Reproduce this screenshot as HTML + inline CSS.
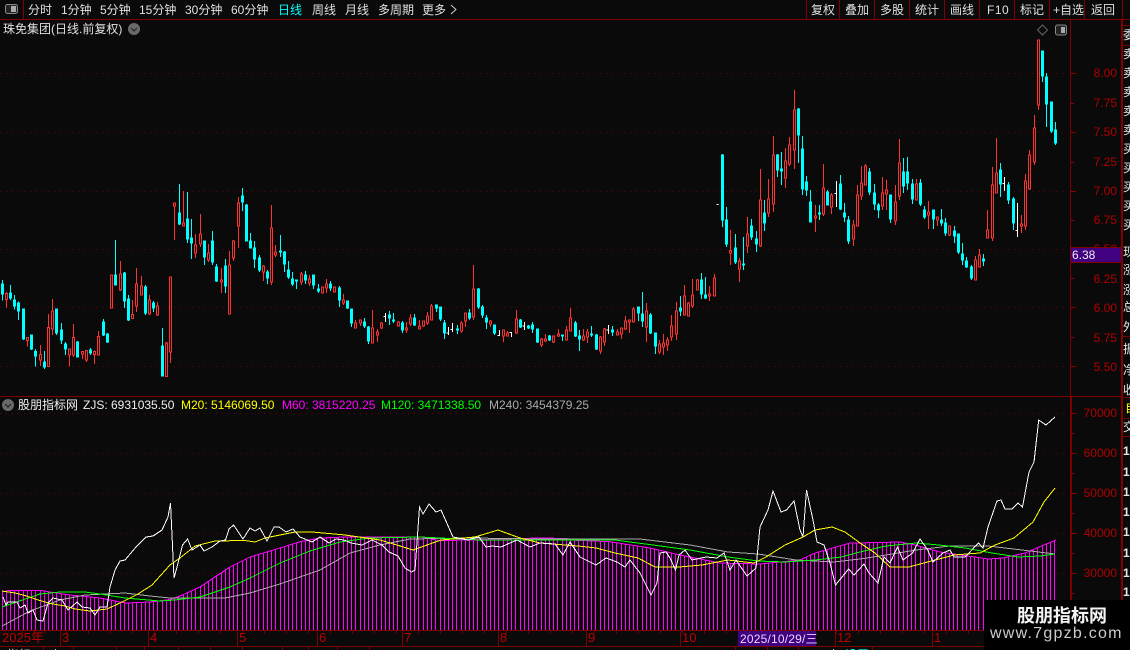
<!DOCTYPE html>
<html><head><meta charset="utf-8"><style>
html,body{margin:0;padding:0;background:#0a0a0a}
#p{position:relative;width:1130px;height:650px;overflow:hidden;background:#0a0a0a;font:12px/14px "Liberation Sans","WenQuanYi Zen Hei","Noto Sans CJK SC",sans-serif;color:#ddd}
#p div,#p span.t{position:absolute;white-space:nowrap}
svg{position:absolute;left:0;top:0}
.c,.r,.w{vector-effect:non-scaling-stroke;stroke-width:1}
.c{stroke:#0ff;fill:#0ff}.r{stroke:#ff3232;fill:none}.w{stroke:#fff;fill:none}
.a{color:#b00000;text-align:right;width:46px;left:1071px}
.b{color:#e0e0e0}
.m{color:#c00000;font-size:13px;top:631px}
.s{color:#e8e8e8;left:1123px}
</style></head><body><div id="p">
<svg width="1130" height="650" viewBox="0 0 1130 650" shape-rendering="crispEdges">
<defs><clipPath id="e"><polygon points="2,630 2,592 8,590.5 42,590.5 50,592 70,595 100,598 120,602 127,603 150,602 170,599.5 180,596 200,587 230,567 250,557 280,548 300,541.7 320,538 345,537 420,537 440,540.7 540,538 567,538.5 570,540 610,541.7 650,548 680,555 720,563 760,564 800,560 815,553 850,543 870,542.7 900,542 915,545 940,552 988,559 1003,558 1025,553 1044,545 1056,540 1056,630"/></clipPath></defs>
<!-- frame -->
<path d="M0 19.5H1130M23.5 0V19M806.5 0V19M839.5 0V19M874.5 0V19M909.5 0V19M944.5 0V19M979.5 0V19M1014.5 0V19M1049.5 0V19M1084.5 0V19M1122.5 0V650M1122 25.5H1130M1122 45.5H1130M1122 336.5H1130M1122 397.5H1130M1122 418.5H1130M1122 436.5H1130M1070.5 19V630M1071.5 397V630M1121.5 19V630M0 396.5H1122M0 630.5H1122M0 646.5H1122M43.5 646V650M73.5 646V650M116.5 646V650M144.5 646V650M178.5 646V650M210.5 646V650M242.5 646V650M282.5 646V650M308.5 646V650M337.5 646V650M369.5 646V650M735.5 646V650M767.5 646V650M798.5 646V650M872.5 646V650M60.5 631V646M148.5 631V646M237.5 631V646M317.5 631V646M402.5 631V646M498.5 631V646M586.5 631V646M680.5 631V646M835.5 631V646M932.5 631V646" stroke="#800000" fill="none"/>
<!-- axis ticks -->
<path d="M1071 73.5H1076M1071 103.5H1074M1071 132.5H1076M1071 162.5H1074M1071 191.5H1076M1071 220.5H1074M1071 278.5H1074M1071 307.5H1076M1071 337.5H1074M1071 366.5H1076M1071 413.5H1076M1071 433.5H1074M1071 453.5H1076M1071 473.5H1074M1071 493.5H1076M1071 513.5H1074M1071 533.5H1076M1071 553.5H1074M1071 573.5H1076M1071 593.5H1074" stroke="#900000" fill="none"/>
<line x1="22" y1="632" x2="1120" y2="632" stroke="#800000" stroke-width="3" stroke-dasharray="1 21"/>
<!-- grids -->
<path d="M0 73.5H1068M0 132.5H1068M0 191.5H1068M0 249.5H1068M0 307.5H1068M0 366.5H1068M0 413.5H1068M0 453.5H1068M0 493.5H1068M0 533.5H1068M0 573.5H1068M0 613.5H1068" stroke="#700000" stroke-dasharray="1 5" fill="none"/>
<!-- candles A -->
<g transform="translate(.5 180) scale(1 .33333)">
<path class="c" d="M2 300V362M1 312H3V342H1ZM10 315V360M9 339H11V354H9ZM14 345V388M13 360H15V378H13ZM18 365V420M17 369H19V393H17ZM23 387V480M22 387H24V477H22ZM31 465V510M30 465H32V507H30ZM35 507V560M34 514H36V528H34ZM44 513V567M43 546H45V561H43ZM56 387V465M55 387H57V459H55ZM61 429V492M60 450H62V480H60ZM65 486V525M64 492H66V507H64ZM77 483V531M76 486H78V531H76ZM90 504V525M89 510H91V519H89ZM103 417V468M102 426H104V465H102ZM107 459V489M106 462H108V486H106ZM115 180V315M114 285H116V315H114ZM124 276V384M123 279H125V363H123ZM128 345V423M127 357H129V420H127ZM145 315V405M144 321H146V399H144ZM153 363V396M152 369H154V384H152ZM162 444V588M161 498H163V588H161ZM179 12V135M178 99H180V132H178ZM187 36V189M186 117H188V177H186ZM191 117V237M190 174H192V189H190ZM204 183V255M203 183H205V231H203ZM212 153V255M211 183H213V246H211ZM216 252V306M215 261H217V303H215ZM225 237V339M224 258H226V318H224ZM242 24V93M241 48H243V66H241ZM246 72V183M245 75H247V183H245ZM250 159V204M249 183H251V204H249ZM254 183V264M253 204H255V237H253ZM259 225V276M258 234H260V270H258Z"/>
<path class="r" d="M6 336V340M6 358V384M5 340H7V358H5ZM27 472H27M27 482V500M26 472H28V482H26ZM40 495V523M40 540V558M39 523H41V540H39ZM48 402V442M47 442H49V560H47ZM52 357V393M52 447V465M51 393H53V447H51ZM69 507H69M69 525V560M68 507H70V525H68ZM73 432V472M73 525V531M72 472H74V525H72ZM82 514H82M82 522V537M81 514H83V522H81ZM86 511H86M86 540V546M85 511H87V540H85ZM94 511V514M94 524V552M93 514H95V524H93ZM98 453V469M97 469H99V525H97ZM111 285V285M110 285H112V384H110ZM120 243V282M120 330V333M119 282H121V330H119ZM132 360V403M131 403H133V416H131ZM136 264V312M136 378V396M135 312H137V378H135ZM141 288V318M140 318H142V345H140ZM149 345V360M149 402V405M148 360H150V402H148ZM157 366V378M157 405V408M156 378H158V405H156ZM166 486V489M165 489H167V590H165ZM170 291V291M170 516V549M169 291H171V516H169ZM174 78V180M173 69H175V78H173ZM183 33V129M182 129H184V138H182ZM195 162V195M195 219V234M194 195H196V219H194ZM200 102V162M200 192V201M199 162H201V192H199ZM208 192V219M208 240V246M207 219H209V240H207ZM221 264V300M221 306V339M220 300H222V306H220ZM229 213V255M228 255H230V402H228ZM233 180V183M233 234V243M232 183H234V234H232ZM238 51V69M238 138V204M237 69H239V138H237Z"/>
</g>
<!-- candles B -->
<g transform="translate(.5 240) scale(1 .33333)">
<path class="c" d="M267 90V132M266 96H268V114H266ZM280 -15V51M279 33H281V36H279ZM284 33V96M283 36H285V72H283ZM288 63V117M287 90H289V111H287ZM292 96V138M291 117H293V132H291ZM296 120V147M295 120H297V123H295ZM305 93V132M304 105H306V120H304ZM313 105V147M312 105H314V135H312ZM318 132V159M317 147H319V153H317ZM330 123V153M329 132H331V144H329ZM339 138V201M338 144H340V180H338ZM347 183V207M346 183H348V204H346ZM351 207V261M350 207H352V249H350ZM364 234V264M363 246H365V258H363ZM368 258V312M367 261H369V303H367ZM389 213V255M388 225H390V234H388ZM393 219V249M392 240H394V243H392ZM402 243V279M401 249H403V270H401ZM414 222V258M413 234H415V255H413ZM436 195V216M435 195H437V204H435ZM440 201V243M439 201H441V237H439ZM444 240V297M443 249H445V279H443ZM457 255V282M456 267H458V270H456ZM469 207V240M468 219H470V234H468ZM478 144V207M477 147H479V201H477Z"/>
<path class="r" d="M263 75V78M263 96V123M262 78H264V96H262ZM271 -105V-36M271 126V135M270 -36H272V126H270ZM275 15V36M275 45V51M274 36H276V45H274ZM301 96V102M301 126V135M300 102H302V126H300ZM309 105V117M309 129V138M308 117H310V129H308ZM322 141V141M321 141H323V159H321ZM326 117V132M326 144V159M325 132H327V144H325ZM334 141V141M333 141H335V156H333ZM343 162V180M343 189V195M342 180H344V189H342ZM355 240V249M354 249H356V264H354ZM360 240V240M360 249V258M359 240H361V249H359ZM372 210V264M371 264H373V309H371ZM377 267V276M377 285V306M376 276H378V285H376ZM381 246V249M381 264V267M380 249H382V264H380ZM398 243V246M397 246H399V258H397ZM406 246V264M406 270V279M405 264H407V270H405ZM410 222V234M410 252V258M409 234H411V252H409ZM419 240V258M418 258H420V267H418ZM423 243V243M423 258V261M422 243H424V258H422ZM427 216V228M427 249V255M426 228H428V249H426ZM431 192V198M430 198H432V240H430ZM461 243V249M461 273V279M460 249H462V273H460ZM465 219V219M465 243V261M464 219H466V243H464ZM473 75V147M473 231V240M472 147H474V231H472Z"/>
<path class="w" d="M385 219V246M383 229H385M448 261V285M446 279H448M452 249V276M450 268H452"/>
</g>
<!-- candles C -->
<g transform="translate(.5 260) scale(1 .33333)">
<path class="c" d="M482 135V174M481 141H483V165H481ZM486 165V207M485 174H487V186H485ZM494 195V225M493 195H495V219H493ZM520 177V204M519 180H521V201H519ZM528 195V207M527 198H529V204H527ZM532 186V219M531 195H533V207H531ZM537 207V249M536 207H538V246H536ZM549 225V243M548 228H550V240H548ZM562 225V243M561 225H563V228H561ZM575 183V231M574 189H576V228H574ZM579 210V273M578 228H580V237H578ZM591 198V231M590 222H592V225H590ZM596 222V270M595 225H597V267H595ZM612 198V228M611 210H613V216H611ZM638 141V183M637 141H639V159H637ZM642 96V201M641 162H643V183H641ZM650 159V222M649 165H651V219H649ZM655 219V282M654 219H656V258H654ZM680 108V168M679 144H681V153H679ZM701 39V117M700 60H702V102H700ZM705 51V117M704 105H706V114H704Z"/>
<path class="r" d="M490 180V183M490 192V201M489 183H491V192H489ZM503 210H503M503 228V246M502 210H504V228H502ZM507 213V219M506 219H508V228H506ZM516 150V177M516 219V222M515 177H517V219H515ZM541 234V237M541 255V261M540 237H542V255H540ZM545 222V237M545 243V246M544 237H546V243H544ZM553 228V228M553 246V249M552 228H554V246H552ZM558 207V222M558 228V231M557 222H559V228H557ZM566 198V210M565 210H567V240H565ZM570 144V174M569 174H571V213H569ZM583 207V228M583 240V243M582 228H584V240H582ZM587 207V216M587 231V249M586 216H588V231H586ZM600 228V231M600 273V282M599 231H601V273H599ZM604 204V207M604 246V258M603 207H605V246H603ZM617 207V216M616 216H618V225H616ZM621 204V204M621 222V237M620 204H622V222H620ZM625 168V183M625 207V210M624 183H626V207H624ZM629 180V180M629 186V219M628 180H630V186H628ZM633 141V147M632 147H634V186H632ZM646 129V153M646 201V246M645 153H647V201H645ZM659 240V252M659 276V282M658 252H660V276H658ZM663 222V249M663 261V285M662 249H664V261H662ZM667 231V240M667 255V273M666 240H668V255H666ZM671 165V198M671 231V243M670 198H672V231H670ZM676 126V153M676 222V240M675 153H677V222H675ZM684 75V108M683 108H685V165H683ZM688 126V129M687 129H689V168H687ZM692 57V105M692 138V144M691 105H693V138H691ZM697 57V60M696 60H698V90H696ZM709 78V102M709 108V123M708 102H710V108H708ZM714 42V54M713 54H715V108H713Z"/>
<path class="w" d="M499 210V228M497 226H499M511 216V231M509 217H511M524 186V210M522 198H524M608 195V222M606 210H608"/>
</g>
<!-- candles D -->
<g transform="translate(.5 80) scale(1 .33333)">
<path class="c" d="M722 222V441M721 225H723V420H721ZM726 381V501M725 420H727V492H725ZM735 462V552M734 504H736V546H734ZM743 471V570M742 552H744V555H742ZM751 417V480M750 438H752V471H750ZM756 453V516M755 477H757V492H755ZM764 360V453M763 399H765V429H763ZM777 222V291M776 225H778V270H776ZM781 216V315M780 267H782V273H780ZM798 84V249M797 87H799V165H797ZM802 168V345M801 207H803V327H801ZM806 288V348M805 306H807V330H805ZM810 330V426M809 366H811V426H809ZM819 375V420M818 399H820V402H818ZM827 330V375M826 336H828V375H826ZM840 285V390M839 312H841V387H839ZM844 369V426M843 399H845V411H843ZM848 408V492M847 420H849V483H847ZM869 264V345M868 276H870V336H868ZM874 312V390M873 339H875V372H873ZM878 369V414M877 375H879V390H877ZM890 345V429M889 345H891V417H889ZM903 234V339M902 276H904V318H902ZM907 231V330M906 276H908V309H906ZM912 297V372M911 312H913V357H911ZM920 297V378M919 309H921V372H919ZM924 378V417M923 390H925V411H923ZM933 390V447M932 390H934V417H932ZM941 387V438M940 420H942V429H940ZM945 414V468M944 429H946V459H944ZM954 438V489M953 453H955V468H953ZM958 462V522M957 462H959V516H957ZM962 489V555M961 522H963V540H961ZM966 531V564M965 543H967V561H965ZM971 555V600M970 561H972V594H970ZM983 522V558M982 537H984V543H982ZM1000 249V351M999 270H1001V312H999ZM1008 306V372M1007 315H1009V360H1007ZM1013 351V450M1012 357H1014V429H1012Z"/>
<path class="r" d="M730 450V511M730 519V555M729 511H731V519H729ZM739 534V543M739 567V606M738 543H740V567H738ZM747 411V462M747 498V519M746 462H748V498H746ZM760 267V360M760 498V501M759 360H761V498H759ZM768 297V357M768 399V411M767 357H769V399H767ZM773 168V225M773 372V396M772 225H774V372H772ZM785 204V243M785 294V324M784 243H786V294H784ZM789 171V195M789 252V258M788 195H790V252H788ZM794 30V90M794 210V267M793 90H795V210H793ZM815 375V408M815 414V456M814 408H816V414H814ZM823 252V324M823 402V408M822 324H824V402H822ZM831 339V345M831 381V402M830 345H832V381H830ZM853 420V435M853 477V498M852 435H854V477H852ZM857 315V345M856 345H858V438H856ZM861 258V309M861 348V360M860 309H862V348H860ZM865 252V258M864 258H866V315H864ZM882 291V339M882 378V390M881 339H883V378H881ZM886 300V330M886 342V390M885 330H887V342H885ZM895 315V366M895 423V435M894 366H896V423H894ZM899 177V249M899 348V360M898 249H900V348H898ZM916 297V312M915 312H917V360H915ZM928 363V396M928 405V447M927 396H929V405H927ZM937 411V411M937 420V438M936 411H938V420H936ZM949 438V438M949 465V468M948 438H950V465H948ZM975 528V540M974 540H976V600H974ZM979 507V525M978 525H980V561H978ZM987 390V450M986 450H988V474H986ZM992 261V315M992 474V483M991 315H993V474H991ZM996 174V279M995 279H997V339H995ZM1021 405V432M1021 438V459M1020 432H1022V438H1020ZM1025 282V303M1025 438V450M1024 303H1026V438H1024ZM1029 210V225M1029 327V330M1028 225H1030V327H1028ZM1034 105V144M1034 246V255M1033 144H1035V246H1033Z"/>
<path class="w" d="M718 373H716M836 303V381M834 340H836M1004 291V333M1002 310H1004M1017 369V471M1015 451H1017"/>
</g>
<!-- candles E -->
<g transform="translate(.5 0) scale(1 .33333)">
<path class="c" d="M1042 153V246M1041 153H1043V228H1041ZM1046 219V381M1045 231H1047V312H1045ZM1051 306V399M1050 306H1052V393H1050ZM1055 366V435M1054 390H1056V429H1054Z"/>
<path class="r" d="M1038 315V330M1037 120H1039V315H1037Z"/>
</g>
<!-- indicator bars -->
<g clip-path="url(#e)"><line x1="2" y1="565" x2="1056" y2="565" stroke="#f0f" stroke-width="132" stroke-dasharray="1 3 1 3 1 3 1 3 1 4 1 3 1 3 1 3 1 4 1 3 1 3 1 3 1 3 1 4 1 3 1 3 1 3 1 3 1 4"/></g>
<g fill="none">
<polyline stroke="#f0f" points="2,592 8,590.5 42,590.5 50,592 70,595 100,598 120,602 127,603 150,602 170,599.5 180,596 200,587 230,567 250,557 280,548 300,541.7 320,538 345,537 420,537 440,540.7 540,538 567,538.5 570,540 610,541.7 650,548 680,555 720,563 760,564 800,560 815,553 850,543 870,542.7 900,542 915,545 940,552 988,559 1003,558 1025,553 1044,545 1056,540"/>
<polyline stroke="#aaa" points="2,626 30,611 60,600 85,595 125,593 150,596 170,598 225,598 250,593 280,584 320,570 350,553 380,545 410,539 470,538 540,539 640,539 690,545 728,552 758,554 796,560 834,562 860,559 886,555 916,550 950,546 988,546 1022,550 1055,554"/>
<polyline stroke="#0f0" points="2,607 40,594 60,592 85,592 100,594 125,598 160,601 175,600 200,597 230,587 250,578 280,563 310,551 340,542 370,538 420,537 480,540 540,540 615,540 653,545 690,550 728,557 758,561 785,562 815,560 841,557 860,552 886,546 916,543 939,545 965,548 992,553 1018,557 1040,556 1055,554"/>
<polyline stroke="#ff0" points="2,591 15,593 25,595.5 35,599 50,603.5 65,606 75,609 90,611 107,609 120,603 138,594 152,585 170,565 180,558 195,546 215,541 245,540.5 255,542 265,538 295,532 312,532 345,535 380,540 400,546 413,550 441,540 475,537 498,530 520,538 540,543 578,546 596,548 615,553 638,558 655,567 679,567 702,565 728,560 754,563 766,557 785,545 803,537 815,530 832,527 845,532 860,543 875,553 890,567 909,567 924,563 939,559 954,555 980,553 995,545 1014,538 1033,522 1044,502 1055,488"/>
<polyline stroke="#fff" points="3,597 6,605 8,602 17,602 20,608 25,605 28,613 33,610 37,620 43,621 48,603 53,598 62,600 68,610 77,602 82,607 90,608 95,615 100,607 107,607 110,587 115,570 120,561 125,560 136,547 146,537 153,536 162,530 168,517 170.5,503 174,578 177,567 182.5,545 187.6,539 192,550 200,545 204,551 212,547 220,541 225.5,540 229,529 233.5,525 243,539 250,528 255,531 260,528 267,541 274,527 279,527 286,532 293,529 300,537 312,542 320,537 329,543 336,539 344,540 351,543 362,545 372,540 382,545 389,552 398,556 405,568 411.5,572 415,570 419.5,507 423,514 429,504 436,512 441,510 453,537 468,540 479,537 486,547 492,546 501,547 510,543 517,540 530,547 540,543 555,544 563,555 570,542 580,557 596,565 606,558 617,562 625,567 630,560 640,573 651,595 657,583 660,553 666,552 670,558 675.5,570 679,555 685,550 692,560 706,557 717,558 724,553 730,570 736,560 747,576 756,568 760,527 768,510 773,491 781,512 786.5,510 794,501 800,530 803,537 806.5,490 813,520 817,542 824,545 830,563 835.5,585 848.6,569 854,575 864,564 869,573 878,583 884,557 890,563 897.5,547 903,560 912.6,553 920,539 927.7,550 933,562 943,553 950,550 954,557 965,557 978.5,543 983,548 988,527 997,501 1001,500 1005,509 1012,509 1018,503 1022.5,507 1029,472 1034,462 1038.7,420 1046,425 1055,417"/>
</g>
<!-- icons -->
<g shape-rendering="auto">
<rect x="5.5" y="4.5" width="12" height="9" rx="2" fill="#222" stroke="#888"/><rect x="11" y="6" width="5" height="6" fill="#aaa"/>
<circle cx="134" cy="29" r="6" fill="#6a6a6a"/><path d="M131 28l3 3 3-3" stroke="#222" stroke-width="1.2" fill="none"/>
<circle cx="8" cy="405" r="6" fill="#6a6a6a"/><path d="M5 404l3 3 3-3" stroke="#222" stroke-width="1.2" fill="none"/>
<path d="M1042.5 25l5 5-5 5-5-5z" fill="none" stroke="#666"/>
<rect x="1055.5" y="25" width="11" height="10" rx="2" fill="#222" stroke="#888"/><rect x="1061" y="27" width="4" height="6" fill="#aaa"/>
<path d="M451 5l5 4.5-5 4.5" fill="none" stroke="#ccc"/>
</g>
<rect x="738" y="631" width="78" height="15" fill="#400080"/>
</svg>
<!-- toolbar -->
<div class="b" style="left:28px;top:3px">分时</div><div class="b" style="left:61px;top:3px">1分钟</div><div class="b" style="left:100px;top:3px">5分钟</div><div class="b" style="left:139px;top:3px">15分钟</div><div class="b" style="left:185px;top:3px">30分钟</div><div class="b" style="left:231px;top:3px">60分钟</div><div style="left:278px;top:3px;color:#0ff">日线</div><div class="b" style="left:312px;top:3px">周线</div><div class="b" style="left:345px;top:3px">月线</div><div class="b" style="left:378px;top:3px">多周期</div><div class="b" style="left:422px;top:3px">更多</div>
<div class="b" style="left:811px;top:3px">复权</div><div class="b" style="left:845px;top:3px">叠加</div><div class="b" style="left:880px;top:3px">多股</div><div class="b" style="left:915px;top:3px">统计</div><div class="b" style="left:950px;top:3px">画线</div><div class="b" style="left:987px;top:3px;letter-spacing:.5px">F10</div><div class="b" style="left:1020px;top:3px">标记</div><div class="b" style="left:1053px;top:3px">+自选</div><div class="b" style="left:1091px;top:3px">返回</div>
<div class="b" style="left:3px;top:22px">珠免集团(日线.前复权)</div>
<!-- price axis -->
<div class="a" style="top:66px">8.00</div><div class="a" style="top:96px">7.75</div><div class="a" style="top:125px">7.50</div><div class="a" style="top:155px">7.25</div><div class="a" style="top:184px">7.00</div><div class="a" style="top:213px">6.75</div><div class="a" style="top:242px">6.50</div><div class="a" style="top:272px">6.25</div><div class="a" style="top:301px">6.00</div><div class="a" style="top:331px">5.75</div><div class="a" style="top:360px">5.50</div>
<div style="left:1071px;top:247px;width:50px;height:14px;background:#400080;border-top:1px solid #800000;border-bottom:1px solid #800000"></div>
<div style="left:1072px;top:248px;color:#eee">6.38</div>
<!-- legend -->
<div style="left:18px;top:398px;color:#eee">股朋指标网</div><div style="left:83px;top:398px;color:#eee">ZJS: 6931035.50</div><div style="left:181px;top:398px;color:#ff0">M20: 5146069.50</div><div style="left:282px;top:398px;color:#f0f">M60: 3815220.25</div><div style="left:381px;top:398px;color:#0f0">M120: 3471338.50</div><div style="left:489px;top:398px;color:#aaa">M240: 3454379.25</div>
<!-- lower axis -->
<div class="a" style="top:406px">70000</div><div class="a" style="top:446px">60000</div><div class="a" style="top:486px">50000</div><div class="a" style="top:526px">40000</div><div class="a" style="top:566px">30000</div>
<!-- time axis -->
<div class="m" style="left:2px">2025年</div><div class="m" style="left:62px">3</div><div class="m" style="left:150px">4</div><div class="m" style="left:239px">5</div><div class="m" style="left:319px">6</div><div class="m" style="left:404px">7</div><div class="m" style="left:500px">8</div><div class="m" style="left:588px">9</div><div class="m" style="left:682px">10</div><div class="m" style="left:837px">12</div><div class="m" style="left:934px">1</div>
<div style="left:740px;top:632px;color:#e6d8ff;letter-spacing:.2px">2025/10/29/三</div>
<!-- right column -->
<div class="s" style="top:28px">委</div><div class="s" style="top:47px">卖</div><div class="s" style="top:66px">卖</div><div class="s" style="top:85px">卖</div><div class="s" style="top:104px">卖</div><div class="s" style="top:123px">卖</div><div class="s" style="top:142px">买</div><div class="s" style="top:161px">买</div><div class="s" style="top:180px">买</div><div class="s" style="top:199px">买</div><div class="s" style="top:218px">买</div><div class="s" style="top:245px">现</div><div class="s" style="top:263px">涨</div><div class="s" style="top:283px">涨</div><div class="s" style="top:300px">总</div><div class="s" style="top:320px">外</div><div class="s" style="top:342px">振</div><div class="s" style="top:363px">净</div><div class="s" style="top:383px">收</div><div class="s" style="top:401px;left:1125px;color:#ff0">自</div><div class="s" style="top:420px">交</div>
<div class="s" style="top:444px;font-weight:bold">1</div><div class="s" style="top:465px;font-weight:bold">1</div><div class="s" style="top:485px;font-weight:bold">1</div><div class="s" style="top:505px;font-weight:bold">1</div><div class="s" style="top:525px;font-weight:bold">1</div><div class="s" style="top:546px;font-weight:bold">1</div><div class="s" style="top:566px;font-weight:bold">1</div><div class="s" style="top:585px;font-weight:bold">1</div>
<!-- bottom clipped tabs -->
<div style="left:7px;top:648px;color:#ddd">指标</div><div style="left:50px;top:648px;color:#ddd">上</div><div style="left:828px;top:648px;color:#ddd">上</div><div style="left:845px;top:648px;color:#0ff">设置</div>
<!-- watermark -->
<div style="left:984px;top:600px;width:146px;height:50px;background:#000"></div>
<div style="left:1017px;top:604px;font-size:18px;line-height:22px;font-weight:bold;color:#f4f4f4;font-family:'Noto Sans CJK SC',sans-serif">股朋指标网</div>
<div style="left:990px;top:624px;font-size:16px;line-height:20px;letter-spacing:1.25px;color:#ccc">www.7gpzb.com</div>
</div></body></html>
